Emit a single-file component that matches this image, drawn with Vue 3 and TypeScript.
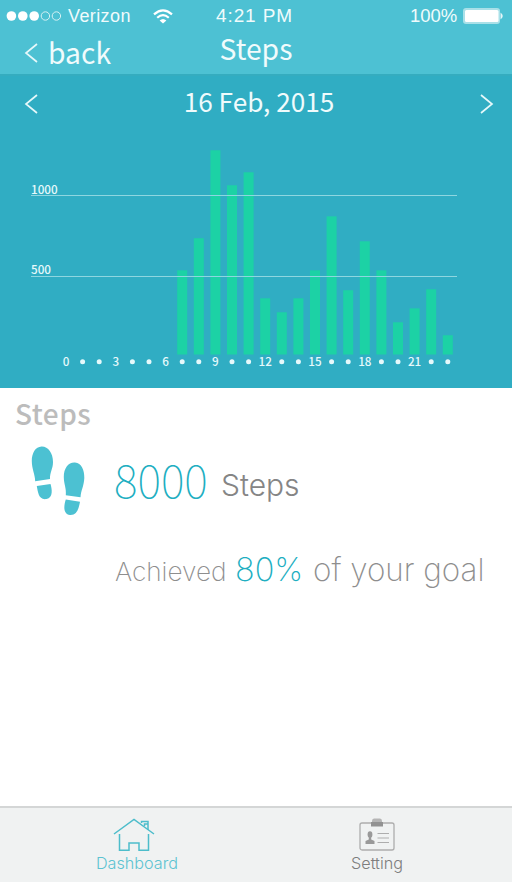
<script setup lang="ts">
interface HourBar {
  hour: number
  steps: number
}

const hourlySteps: number[] = [
  0, 0, 0, 0, 0, 0, 0, 537, 735, 1278, 1062, 1142,
  364, 278, 364, 537, 870, 414, 716, 537, 216, 302, 420, 136,
]
const bars: HourBar[] = hourlySteps.map((steps, hour) => ({ hour, steps }))
const gridValues: number[] = [1000, 500]

const axisZero = 232.3
const floorY = 229.5
const xOf = (hour: number): number => 66 + hour * 16.6
const yOf = (steps: number): number => axisZero - (steps * 81) / 500
</script>

<template>
  <div class="screen">
    <header class="top">
      <div class="status">
        <svg class="signal" width="56" height="12" viewBox="0 0 56 12">
          <circle v-for="i in 3" :key="i" :cx="i * 11.4 - 6" cy="6" r="4.8" fill="#fff" />
          <circle v-for="i in 2" :key="i + 3" :cx="i * 11 + 28.4" cy="6" r="4.2" fill="none" stroke="#d5f1f4" stroke-width="1" />
        </svg>
        <span class="carrier">Verizon</span>
        <svg class="wifi" width="20" height="15" viewBox="0 0 20 15">
          <g fill="none" stroke="#fff" stroke-width="2.2">
            <path d="M1 5.4Q10-2.6 19 5.4" />
            <path d="M4.2 8.7Q10 3.4 15.8 8.7" />
          </g>
          <path d="M6.600 11.500Q10 8.500 13.400 11.500L10 14.600Z" fill="#fff" />
        </svg>
        <span class="clock">4:21 PM</span>
        <span class="percent">100%</span>
        <svg class="battery" width="42" height="18" viewBox="0 0 42 18">
          <rect x="1" y="1" width="37" height="16" rx="3" fill="#a9e0e8" />
          <rect x="3" y="3" width="33.5" height="12" rx="1.5" fill="#fff" />
          <path d="M38.500 5.500Q43 9 38.500 12.500Z" fill="#e4f6f8" />
        </svg>
      </div>
      <nav class="nav">
        <svg class="chevron" width="14" height="20" viewBox="0 0 14 20"><path d="M13 1L2 10L13 19" /></svg>
        <span class="back">back</span>
        <h1 class="title">Steps</h1>
      </nav>
    </header>

    <section class="panel">
      <div class="date-row">
        <svg class="chevron" width="14" height="20" viewBox="0 0 14 20"><path d="M13 1L2 10L13 19" /></svg>
        <span class="date">16 Feb, 2015</span>
        <svg class="chevron" width="14" height="20" viewBox="0 0 14 20"><path d="M1 1L12 10L1 19" /></svg>
      </div>
      <svg class="chart" width="512" height="262" viewBox="0 0 512 262">
        <g fill="#1cd2a5">
          <template v-for="b in bars" :key="b.hour">
            <rect v-if="b.steps > 0" :x="xOf(b.hour) - 5" :y="yOf(b.steps)" width="10" :height="floorY - yOf(b.steps)" />
          </template>
        </g>
        <g v-for="v in gridValues" :key="v">
          <rect x="31" :y="Math.floor(yOf(v))" width="426" height="1" fill="#8ed6e0" />
          <text class="label" x="31" :y="yOf(v) - (v === 500 ? 2.5 : 1)">{{ v }}</text>
        </g>
        <template v-for="b in bars" :key="b.hour">
          <text v-if="b.hour % 3 === 0" class="label" :x="xOf(b.hour)" y="241" text-anchor="middle">{{ b.hour }}</text>
          <circle v-else :cx="xOf(b.hour)" cy="236.8" r="2.5" fill="#e6f9fb" />
        </template>
      </svg>
    </section>

    <main class="summary">
      <h2 class="heading">Steps</h2>
      <div class="row">
        <svg class="feet" width="56" height="70" viewBox="0 0 56 70" fill="#4cc1d2">
          <path d="M10.5 .5C17 .2 22 7 22 16C22 23 18.800 26 19 33L4.200 35.200C4 28 .8 23 .8 15C.8 7 4.500 .8 10.500 .5Z" />
          <path d="M5.800 40L19.500 38C21 43 22.500 51.500 15.500 53C7.500 54.300 7 46 5.800 40Z" />
          <path d="M44 16.500C50.500 17 53.500 24 53.300 32C53 40 50 44 49.500 51.200L34.800 49.300C35.500 42 32.800 38 32.800 31C32.800 22 37.500 16 44 16.500Z" />
          <path d="M34.800 53.500L49 55.800C48 61 46.500 69.500 39 69C31.500 68 33 59 34.800 53.500Z" />
        </svg>
        <span class="count">8000</span>
        <span class="unit">Steps</span>
      </div>
      <p class="goal">
        <span class="achieved">Achieved</span>
        <span class="ratio">80%</span>
        <span class="rest">of your goal</span>
      </p>
    </main>

    <footer class="tabs">
      <a class="tab active">
        <svg class="house" width="42" height="34" viewBox="0 0 42 34" fill="none" stroke="#4dbdcb" stroke-width="1.5">
          <path d="M1 16L21 1.500L41 16" />
          <path d="M6.500 16V32.300H16V25H26V32.300H35.500V16" />
          <path d="M28.500 5V3.500H35V12M31.500 8V6H35" />
        </svg>
        <span>Dashboard</span>
      </a>
      <a class="tab">
        <svg width="36" height="34" viewBox="0 0 36 34">
          <rect x="1" y="5" width="34" height="27" rx="2" fill="none" stroke="#adadad" stroke-width="1.300" />
          <path d="M13 3Q13 .5 15 .5H21Q23 .5 23 3V4H13Z" fill="#b5b5b5" />
          <rect x="12" y="4" width="12" height="4.500" fill="#929292" />
          <ellipse cx="11" cy="16.500" rx="2.400" ry="3.200" fill="#999" />
          <path d="M9.800 18H12.200V21.500L15.500 23V26H6.500V23L9.800 21.500Z" fill="#999" />
          <path d="M18.500 15.500H30M18.500 20H30M18.500 24.500H30" stroke="#adadad" stroke-width="1.200" />
        </svg>
        <span>Setting</span>
      </a>
    </footer>
  </div>
</template>

<style>
body {
  background: #fff;
}
</style>

<style scoped>
.screen {
  display: flex;
  flex-direction: column;
  width: 512px;
  height: 882px;
  overflow: hidden;
  background: #fff;
  font-family: "Noto Sans CJK JP", "Noto Sans", sans-serif;
}
.top {
  height: 74px;
  background: #4dc1d3;
  color: #f0fbfc;
}
.status {
  display: flex;
  align-items: center;
  height: 32px;
  font-family: "Liberation Sans", Arial, sans-serif;
  font-size: 18px;
  line-height: 32px;
  white-space: nowrap;
}
.signal { margin-left: 6px; }
.carrier { width: 66px; margin-left: 6px; letter-spacing: 0.4px; }
.wifi { margin-left: 19px; }
.clock { width: 80px; margin-left: 43px; font-size: 19px; letter-spacing: 0.9px; }
.percent { width: 50px; margin-left: 114px; font-size: 18.5px; }
.battery { margin-left: 2px; }
.nav {
  display: grid;
  grid-template-columns: 24px 140px 1fr 188px;
  align-items: center;
  height: 42px;
  padding-left: 24px;
}
.chevron {
  fill: none;
  stroke: #e5f8fa;
  stroke-width: 1.7;
}
.back { margin-top: -2px; font-size: 28.3px; line-height: 42px; }
.title {
  margin: 0 0 10px;
  font-size: 28.3px;
  font-weight: 400;
  line-height: 32px;
  text-align: center;
}
.panel {
  height: 312px;
  border-top: 2px solid #35acbf;
  background: #30adc3;
  color: #effbfc;
}
.date-row {
  display: flex;
  align-items: center;
  justify-content: space-between;
  height: 45px;
  padding: 4px 18px 0 24px;
}
.date-row .chevron { margin-top: 3px; }
.date {
  margin-bottom: 2px;
  font-size: 26.2px;
  line-height: 39px;
}
.chart { display: block; }
.label {
  fill: #e6f9fb;
  font-size: 11.7px;
  font-weight: 500;
}
.summary { flex: 1; }
.heading {
  margin: 6px 0 0 15px;
  color: #bcbcbc;
  font-size: 28px;
  font-weight: 500;
  letter-spacing: 0.5px;
  line-height: 38px;
}
.row {
  display: flex;
  height: 72px;
  margin: 14px 0 0 31px;
}
.count {
  width: 107px;
  margin-left: 27px;
  color: #20aec1;
  font-size: 45px;
  font-weight: 100;
  line-height: 66px;
}
.unit {
  color: #858585;
  font-family: Inter, sans-serif;
  font-size: 30px;
  font-weight: 300;
  line-height: 79px;
}
.goal {
  display: flex;
  align-items: baseline;
  margin: 30px 0 0 115px;
  color: #8e8e8e;
  font-family: Inter, sans-serif;
  font-weight: 200;
  line-height: 44px;
  white-space: nowrap;
}
.achieved { width: 120px; font-size: 26.2px; }
.ratio { width: 78px; color: #20aec1; font-size: 32.5px; }
.rest { font-size: 31.4px; }
.tabs {
  display: grid;
  grid-template-columns: 1fr 1fr;
  height: 74px;
  padding: 0 15px 0 17px;
  border-top: 2px solid #d4d6d6;
  background: #f0f2f2;
}
.tab {
  display: flex;
  flex-direction: column;
  align-items: center;
  padding-top: 10px;
  color: #7d7d7d;
  font-family: Inter, sans-serif;
  font-size: 16.2px;
  font-weight: 300;
  line-height: 23px;
}
.active { color: #5cc3d1; }
.house { margin-right: 6px; }
</style>
